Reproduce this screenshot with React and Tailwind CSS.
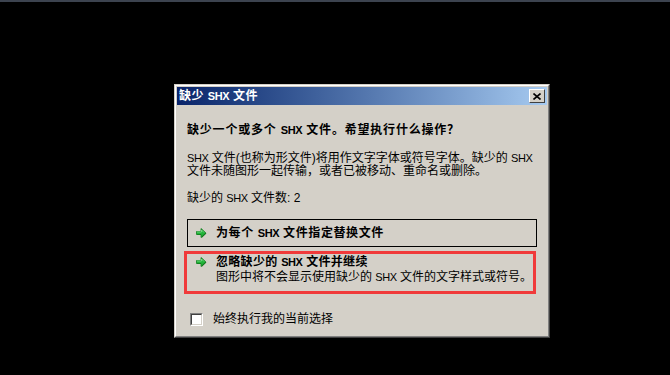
import React from "react";

const FONT = { fontFamily: '"Liberation Sans", "Noto Sans CJK SC", sans-serif' };

function Arrow() {
  return (
    <svg width="12" height="12" viewBox="0 0 12 12" className="shrink-0">
      <path d="M1.5 4.5 H6 V1.5 L10.8 6 L6 10.5 V7.5 H1.5 Z" fill="#0d5c12" transform="translate(0.6 0.6)" />
      <path d="M1.5 4.5 H6 V1.5 L10.8 6 L6 10.5 V7.5 H1.5 Z" fill="#22b33a" stroke="#14801f" strokeWidth="0.8" />
      <path d="M2 5 H6.5 V3 L9 5.5" fill="none" stroke="#7ee08a" strokeWidth="0.8" />
    </svg>
  );
}

function S() {
  return <span className="text-[11px] tracking-[-0.4px]">SHX</span>;
}

export default function App() {
  return (
    <div className="w-[670px] h-[375px] bg-black overflow-hidden text-[12px] leading-[13px] text-black whitespace-nowrap" style={FONT}>
      <div className="h-[2px] bg-[#3c434f]" />
      <div className="ml-[174px] mt-[82px] w-[376px] border border-t-[#d4d0c8] border-l-[#d4d0c8] border-r-[#404040] border-b-[#404040]">
        <div className="border border-t-white border-l-white border-r-[#808080] border-b-[#808080] bg-[#d4d0c8] p-[1px]">
          <div className="h-[18px] flex items-center justify-between pl-[2px] pr-[2px] bg-gradient-to-r from-[#0a246a] to-[#a6caf0]">
            <span className="text-white font-bold tracking-[0.5px]">缺少 <S /> 文件</span>
            <div className="w-[16px] h-[14px] border border-t-white border-l-white border-r-[#404040] border-b-[#404040] bg-[#d4d0c8] flex items-center justify-center">
              <svg width="8" height="7" viewBox="0 0 8 7">
                <path d="M0.5 0.5 L7.5 6.5 M7.5 0.5 L0.5 6.5" stroke="#000" strokeWidth="1.6" />
              </svg>
            </div>
          </div>
          <div className="px-[10px] pt-[19px] pb-[9px]">
            <div className="font-bold tracking-[0.8px]">缺少一个或多个 <S /> 文件。希望执行什么操作？</div>
            <div className="mt-[15px]">
              <div><S /> 文件(也称为形文件)将用作文字字体或符号字体。缺少的 <S /></div>
              <div>文件未随图形一起传输，或者已被移动、重命名或删除。</div>
            </div>
            <div className="mt-[14px]">缺少的 <S /> 文件数: 2</div>
            <div className="mt-[14px] h-[28px] border border-black flex items-center pl-[7px] gap-[9px]">
              <Arrow />
              <span className="font-bold tracking-[0.6px]">为每个 <S /> 文件指定替换文件</span>
            </div>
            <div className="mt-[4px] ml-[-3px] w-[352px] border-[3px] border-[#f03a3a] pl-[8px] pt-[1px] pb-[6px] flex gap-[9px]">
              <div className="pt-[1px]">
                <Arrow />
              </div>
              <div className="leading-[15px]">
                <div className="font-bold tracking-[0.3px]">忽略缺少的 <S /> 文件并继续</div>
                <div>图形中将不会显示使用缺少的 <S /> 文件的文字样式或符号。</div>
              </div>
            </div>
            <div className="mt-[19px] flex items-center pl-[3px] gap-[10px]">
              <div className="w-[13px] h-[13px] border border-t-[#808080] border-l-[#808080] border-r-white border-b-white">
                <div className="w-full h-full bg-white border border-t-[#404040] border-l-[#404040] border-r-[#d4d0c8] border-b-[#d4d0c8]" />
              </div>
              <span>始终执行我的当前选择</span>
            </div>
          </div>
        </div>
      </div>
    </div>
  );
}
